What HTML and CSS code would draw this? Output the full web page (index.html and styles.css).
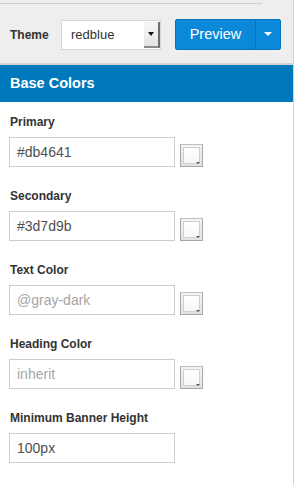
FILE: index.html
```html
<!DOCTYPE html>
<html lang="en">

    <head>
        <meta charset="UTF-8">
        <title>Theme</title>
        <link rel="stylesheet" href="styles.css">
    </head>

    <body>
        <div class="panel">
            <div class="toolbar">
                <div class="topline"></div>
                <div class="theme-row">
                    <span class="theme-label">Theme</span>
                    <div class="select">
                        <span class="select-text">redblue</span>
                        <span class="select-arrow"><i></i></span>
                    </div>
                    <div class="btn-group">
                        <span class="btn-main">Preview</span>
                        <span class="btn-caret"><i></i></span>
                    </div>
                </div>
            </div>

            <div class="section-head">Base Colors</div>

            <div class="fields">
                <div class="field">
                    <label>Primary</label>
                    <div class="row">
                        <div class="input">#db4641</div>
                        <span class="swatch"><i></i></span>
                    </div>
                </div>
                <div class="field">
                    <label>Secondary</label>
                    <div class="row">
                        <div class="input">#3d7d9b</div>
                        <span class="swatch"><i></i></span>
                    </div>
                </div>
                <div class="field">
                    <label>Text Color</label>
                    <div class="row">
                        <div class="input placeholder">@gray-dark</div>
                        <span class="swatch"><i></i></span>
                    </div>
                </div>
                <div class="field">
                    <label>Heading Color</label>
                    <div class="row">
                        <div class="input placeholder">inherit</div>
                        <span class="swatch"><i></i></span>
                    </div>
                </div>
                <div class="field">
                    <label>Minimum Banner Height</label>
                    <div class="row">
                        <div class="input">100px</div>
                    </div>
                </div>
            </div>
        </div>
    </body>

</html>
```

FILE: styles.css
```css
* {
    padding: 0;
    margin: 0;
    box-sizing: border-box;
}

body {
    background: #fff;
    font-family: "Liberation Sans", Arial, sans-serif;
    color: #333;
}

.panel {
    width: 294px;
    height: 485px;
    border-right: 1px solid #d4d4d4;
    background: #fff;
}

.toolbar {
    height: 65px;
    background: #eeeeee;
    border-bottom: 2px solid #d2d2d2;
}

.topline {
    width: 262px;
    height: 4px;
    border-bottom: 1px solid #cfcfcf;
}

.theme-row {
    display: flex;
    align-items: center;
    padding: 15px 0 0 10px;
}

.theme-label {
    width: 51px;
    font-size: 12px;
    font-weight: bold;
    color: #333;
}

.select {
    display: flex;
    width: 100px;
    height: 30px;
    background: #fff;
    border: 1px solid #d6d6d6;
}

.select-text {
    flex: 1;
    padding-left: 9px;
    font-size: 13px;
    line-height: 28px;
    color: #333;
}

.select-arrow {
    position: relative;
    width: 16px;
    margin: 1px 0 1px 0;
    background: linear-gradient(#f7f7f7, #e4e4e4);
    border-right: 2px solid #6e6e6e;
    border-bottom: 2px solid #8a8a8a;
}

.select-arrow i {
    position: absolute;
    left: 4px;
    top: 10px;
    border-left: 3px solid transparent;
    border-right: 3px solid transparent;
    border-top: 4px solid #111;
}

.btn-group {
    display: flex;
    margin-left: 14px;
    height: 31px;
    background: #0b88d8;
    border: 1px solid #0a72b8;
    border-radius: 2px;
}

.btn-main {
    width: 80px;
    font-size: 14.5px;
    line-height: 29px;
    color: #fff;
    text-align: center;
    border-right: 1px solid #0a70b4;
}

.btn-caret {
    position: relative;
    width: 24px;
}

.btn-caret i {
    position: absolute;
    left: 8px;
    top: 12px;
    border-left: 4px solid transparent;
    border-right: 4px solid transparent;
    border-top: 4px solid #fff;
}

.section-head {
    height: 37px;
    padding-left: 10px;
    background: #0078bc;
    color: #fff;
    font-size: 14.5px;
    font-weight: bold;
    line-height: 36px;
}

.fields {
    padding: 12px 0 0 9px;
}

.field {
    margin-bottom: 21px;
}

.field label {
    display: block;
    padding-left: 1px;
    margin-bottom: 7px;
    font-size: 12px;
    font-weight: bold;
    line-height: 16px;
    color: #333;
}

.row {
    display: flex;
    align-items: flex-end;
}

.input {
    width: 166px;
    height: 30px;
    padding-left: 7px;
    border: 1px solid #cccccc;
    background: #fff;
    font-size: 14px;
    line-height: 28px;
    color: #505050;
}

.input.placeholder {
    color: #a6a6a6;
}

.swatch {
    position: relative;
    width: 23px;
    height: 23px;
    margin-left: 5px;
    border: 1px solid #a8a8a8;
    border-top-color: #c0c0c0;
    background: linear-gradient(#f4f4f4, #e2e2e2);
}

.swatch::before {
    content: "";
    position: absolute;
    left: 2px;
    top: 2px;
    width: 15px;
    height: 15px;
    border: 1px solid #d0d0d0;
    background: linear-gradient(#fff, #f6f6f6);
}

.swatch i {
    position: absolute;
    right: 2px;
    bottom: 2px;
    border-left: 2px solid transparent;
    border-right: 2px solid transparent;
    border-top: 2px solid #555;
}
```
